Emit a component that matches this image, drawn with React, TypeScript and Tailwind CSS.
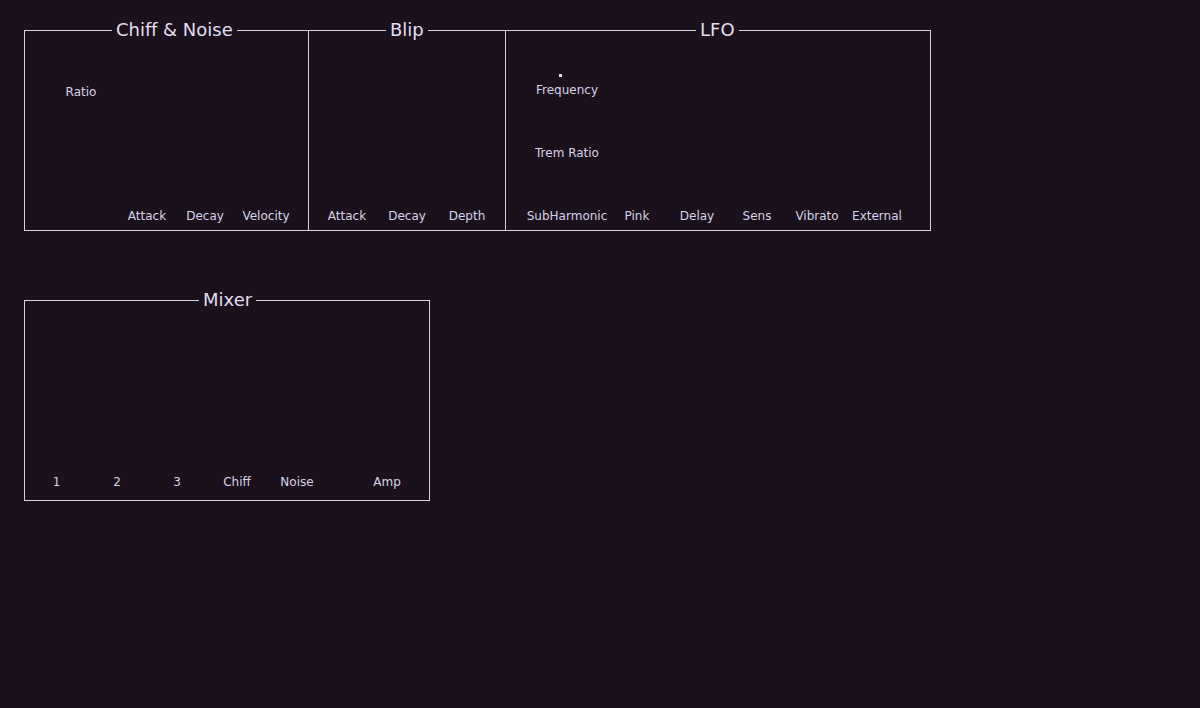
import React from 'react';

// Synth panel layout: fieldset groups with centered legends and knob labels along the bottom

const Label = ({ text, w }: { text: string; w: string }) => (
    <div className={`${w} flex justify-center whitespace-nowrap text-[12px] leading-[14px]`}>{text}</div>
);

const Group = ({ title, legendOffset, className, children }: { title: string; legendOffset: string; className: string; children: React.ReactNode }) => (
    <fieldset className={`border-[#d3d0e3] ${className}`}>
        <legend className={`${legendOffset} px-1 text-[18px] leading-[20px] text-[#e2def0]`}>{title}</legend>
        {children}
    </fieldset>
);

const App: React.FC = () => {
    return (
        <div className="min-h-[708px] w-full bg-[#1b111d] pl-[24px] pt-[20px] text-[#d6d3e6] font-['DejaVu_Sans',sans-serif]">
            <div className="flex">
                <Group title="Chiff & Noise" legendOffset="ml-[87px]" className="w-[285px] border">
                    <div className="flex h-[190px]">
                        <div className="w-[92px] pt-[45px]">
                            <div className="ml-[26px] w-[60px] flex justify-center text-[12px] leading-[14px]">Ratio</div>
                        </div>
                        <div className="flex items-end pb-[7px]">
                            <Label text="Attack" w="w-[60px]" />
                            <Label text="Decay" w="w-[56px]" />
                            <Label text="Velocity" w="w-[66px]" />
                        </div>
                    </div>
                </Group>
                <Group title="Blip" legendOffset="ml-[77px]" className="w-[197px] border border-l-0">
                    <div className="flex h-[190px] items-end pl-[8px] pb-[7px]">
                        <Label text="Attack" w="w-[60px]" />
                        <Label text="Decay" w="w-[60px]" />
                        <Label text="Depth" w="w-[60px]" />
                    </div>
                </Group>
                <Group title="LFO" legendOffset="ml-[190px]" className="w-[425px] border border-l-0">
                    <div className="flex h-[190px] pl-[21px] pb-[7px]">
                        <div className="flex w-[80px] flex-col">
                            <div className="ml-[32px] mt-[34px] h-[3px] w-[3px] bg-[#e2def0]" />
                            <div className="mt-[6px] flex justify-center text-[12px] leading-[14px]">Frequency</div>
                            <div className="mt-[49px] flex justify-center text-[12px] leading-[14px]">Trem Ratio</div>
                            <div className="mt-auto flex justify-center whitespace-nowrap text-[12px] leading-[14px]">SubHarmonic</div>
                        </div>
                        <div className="flex items-end">
                            <Label text="Pink" w="w-[60px]" />
                            <Label text="Delay" w="w-[60px]" />
                            <Label text="Sens" w="w-[60px]" />
                            <Label text="Vibrato" w="w-[60px]" />
                            <Label text="External" w="w-[60px]" />
                        </div>
                    </div>
                </Group>
            </div>

            <div className="mt-[59px] flex">
                <Group title="Mixer" legendOffset="ml-[174px]" className="w-[406px] border">
                    <div className="flex h-[190px] items-end pl-[1px] pb-[11px]">
                        <Label text="1" w="w-[61px]" />
                        <Label text="2" w="w-[60px]" />
                        <Label text="3" w="w-[60px]" />
                        <Label text="Chiff" w="w-[60px]" />
                        <Label text="Noise" w="w-[60px]" />
                        <div className="w-[30px]" />
                        <Label text="Amp" w="w-[60px]" />
                    </div>
                </Group>
            </div>
        </div>
    );
};

export default App;
